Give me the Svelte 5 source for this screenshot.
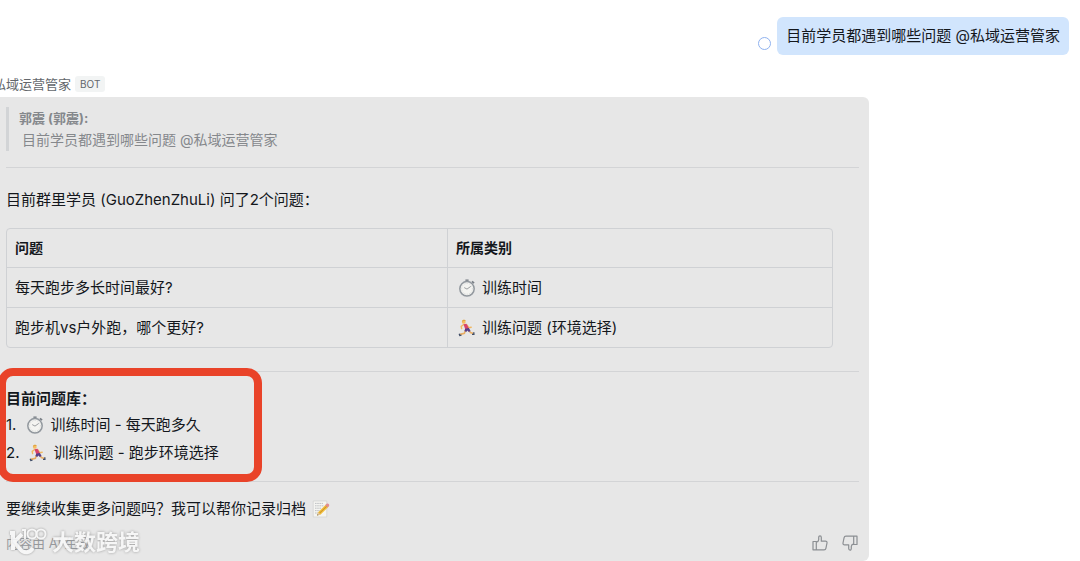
<script lang="ts">
    const question = "目前学员都遇到哪些问题 @私域运营管家";

    const rows = [
        {question: "每天跑步多长时间最好?", icon: "timer", category: "训练时间"},
        {question: "跑步机vs户外跑，哪个更好?", icon: "runner", category: "训练问题 (环境选择)"}
    ];

    const library = [
        {icon: "timer", text: "训练时间 - 每天跑多久"},
        {icon: "runner", text: "训练问题 - 跑步环境选择"}
    ];

    let vote = $state("");
</script>

{#snippet emoji(name)}
  {#if name === "timer"}
    <svg class="emoji" viewBox="0 0 18 18" aria-hidden="true">
      <path d="M7.4 .4h3.2v2.4H7.4z" fill="#858b91"/>
      <path d="M14 2.3l2 1.9" stroke="#777d84" stroke-width="1.8"/>
      <circle cx="9" cy="9.8" r="7.2" fill="#f4f4f1" stroke="#92989e" stroke-width="1.5"/>
      <circle cx="9" cy="9.8" r="5.4" fill="none" stroke="#c7c9ca" stroke-width=".8" stroke-dasharray=".7 1.1"/>
      <path d="M6.2 8.6l2.8 1.5 3.8-2.7" fill="none" stroke="#85898d" stroke-width=".8"/>
    </svg>
  {:else if name === "runner"}
    <svg class="emoji" viewBox="0 0 18 18" aria-hidden="true">
      <path d="M5.4 5.8L3.2 7.4l.4 2.2M9 6l1.8 2.8 2.4-.6" fill="none" stroke="#f2b85f" stroke-width="1.4" stroke-linecap="round"/>
      <path d="M7.4 11.4l-1 2.9-4.4 1.1M11 11.6l1.4 1.9 3 .9" fill="none" stroke="#e9ad62" stroke-width="1.6"/>
      <path d="M5.5 5.2l3-.5 2.6 5-3.6 1.3z" fill="#d9436a"/>
      <path d="M7.2 9.8l3.7-.9 1.7 3-1.8 1-1.5-1.4-1 1.5-1.9-.9z" fill="#573f88"/>
      <circle cx="5.8" cy="2.9" r="1.9" fill="#f5bd62"/>
      <path d="M3.9 2.8c.1-2.3 3.3-2.6 3.9-.7l-2.1 0z" fill="#e0a540"/>
      <path d="M1.2 14.7l.6 1.7 1.7-.3M15.8 13.2l.1 2.1-1.9.1" fill="none" stroke="#3f4d68" stroke-width="1.3"/>
    </svg>
  {:else}
    <svg class="emoji" viewBox="0 0 18 18" aria-hidden="true">
      <path d="M1.2 1h13.6v16H1.2z" fill="#f4f4f1" stroke="#d0d1d0" stroke-width=".7"/>
      <path d="M3 3.4h8M3 5.8h9M3 8.2h6M3 10.6h5M3 13h3" stroke="#b0b4b8" stroke-width=".8" stroke-dasharray="1.6 .6"/>
      <path d="M5.2 15.5l1-3.3 8-8 2.5 2.4-8.1 8z" fill="#f1bd38"/>
      <path d="M7.2 13.5l8.3-8.1" stroke="#b98228" stroke-width=".8"/>
      <path d="M13.2 5.2l1.5-1.5c1.1-1 3.3 1 2.3 2.2l-1.4 1.5z" fill="#e18d91"/>
      <path d="M5.2 15.5l1-3.3 2.4 2.4z" fill="#e4c69b"/>
      <path d="M5.2 15.5l.4-1.3.9.8z" fill="#444"/>
    </svg>
  {/if}
{/snippet}

<main class="chat">
  <div class="sent">
    <span class="read-state"></span>
    <div class="bubble">{question}</div>
  </div>

  <div class="sender">
    <span>私域运营管家</span>
    <span class="tag">BOT</span>
  </div>

  <article class="card">
    <blockquote>
      <strong>郭震 (郭震):</strong>
      <p>{question}</p>
    </blockquote>
    <hr>
    <p class="intro">目前群里学员 (GuoZhenZhuLi) 问了2个问题：</p>
    <table>
      <thead>
        <tr><th scope="col">问题</th><th scope="col">所属类别</th></tr>
      </thead>
      <tbody>
        {#each rows as row}
          <tr>
            <td>{row.question}</td>
            <td><span class="with-icon">{@render emoji(row.icon)}{row.category}</span></td>
          </tr>
        {/each}
      </tbody>
    </table>
    <hr>
    <section class="library">
      <h2>目前问题库：</h2>
      <ol>
        {#each library as item, index}
          <li><span class="number">{index + 1}.</span>{@render emoji(item.icon)}{item.text}</li>
        {/each}
      </ol>
      <div class="marker"></div>
    </section>
    <hr>
    <p class="closing">要继续收集更多问题吗？我可以帮你记录归档 {@render emoji("memo")}</p>
    <footer>
      <span>内容由 AI 生成</span>
      <div class="votes">
        <button aria-label="赞" aria-pressed={vote === "up"} onclick={() => vote = "up"}>
          <svg viewBox="0 0 16 16">
            <path d="M1 6.5h3.3v8.3H1zM4.3 7.2c1.6-.3 2.3-1.3 2.4-2.6V2.4c0-2 2.6-2 2.6.1v3.7h4.2c1 0 1.7.8 1.5 1.8l-1.1 5.3c-.2 1-.8 1.5-1.8 1.5H4.3"/>
          </svg>
        </button>
        <button aria-label="踩" aria-pressed={vote === "down"} onclick={() => vote = "down"}>
          <svg class="down" viewBox="0 0 16 16">
            <path d="M1 6.5h3.3v8.3H1zM4.3 7.2c1.6-.3 2.3-1.3 2.4-2.6V2.4c0-2 2.6-2 2.6.1v3.7h4.2c1 0 1.7.8 1.5 1.8l-1.1 5.3c-.2 1-.8 1.5-1.8 1.5H4.3"/>
          </svg>
        </button>
      </div>
      <div class="watermark">
        <svg viewBox="0 0 42 28" aria-hidden="true">
          <path d="M3 5h3v17M15 6l-8 8 6 7c4 5 10 4 13-1"/>
          <path class="loops" d="M15 2h3v9"/>
          <circle class="loops" cx="25" cy="6" r="4.5"/>
          <circle class="loops" cx="34" cy="6" r="4.5"/>
        </svg>
        <span>大数跨境</span>
      </div>
    </footer>
  </article>
</main>

<style>
    :global(body) {
        margin: 0;
        background-color: #fff;
        overflow: hidden;
    }

    .chat {
        font-family: Inter, "Noto Sans CJK SC", sans-serif;
        font-size: 15px;
        line-height: 24px;
        color: #14171c;
        padding-top: 17px;
        margin-left: -7px;
    }

    p, h2, ol, blockquote {
        margin: 0;
        padding: 0;
    }

    .sent {
        display: flex;
        justify-content: flex-end;
        align-items: flex-end;
        gap: 6px;
        padding-right: 11px;
    }

    .read-state {
        width: 11px;
        height: 11px;
        margin-bottom: 5px;
        border: 1px solid #8fb2ef;
        border-radius: 50%;
    }

    .bubble {
        padding: 7px 9px;
        border-radius: 6px;
        background-color: #d1e5fd;
    }

    .sender {
        display: flex;
        align-items: center;
        gap: 4px;
        height: 18px;
        margin-top: 20px;
        font-size: 13px;
        color: #63676c;
    }

    .tag {
        padding: 0 5px;
        border-radius: 3px;
        background-color: #f2f4f4;
        font-size: 10px;
        line-height: 16px;
    }

    .card {
        box-sizing: border-box;
        margin-top: 4px;
        margin-right: 211px;
        padding: 10px 10px 6px 13px;
        border-radius: 6px;
        background-color: #e7e7e7;
    }

    blockquote {
        padding-left: 10px;
        border-left: 3px solid #d2d4d6;
        font-size: 14px;
        line-height: 22px;
        color: #85888c;
    }

    blockquote strong {
        display: block;
        font-size: 13px;
    }

    blockquote p {
        padding-left: 3px;
    }

    hr {
        height: 1px;
        margin: 16px 0 0;
        border: none;
        background-color: #d3d4d6;
    }

    .intro {
        padding: 20px 0 16px;
    }

    table {
        width: calc(100% - 26px);
        table-layout: fixed;
        border: 1px solid #cfd1d4;
        border-radius: 4px;
        border-spacing: 0;
    }

    th, td {
        height: 23px;
        padding: 8px;
        text-align: left;
    }

    th {
        height: 22px;
        font-size: 14px;
        line-height: 22px;
    }

    th:first-child {
        width: 424px;
    }

    td {
        border-top: 1px solid #cfd1d4;
        line-height: 23px;
    }

    th + th, td + td {
        border-left: 1px solid #cfd1d4;
    }

    .with-icon, li, .closing {
        display: flex;
        align-items: center;
    }

    .with-icon {
        gap: 6px;
        padding-left: 2px;
    }

    .emoji {
        flex: none;
        width: 18px;
        height: 18px;
    }

    table + hr {
        margin-top: 23px;
    }

    .library {
        position: relative;
        padding-top: 15px;
    }

    h2 {
        font-size: 15px;
        line-height: 24px;
    }

    ol {
        list-style: none;
    }

    li {
        gap: 6px;
        height: 28px;
    }

    .number {
        padding-right: 4px;
    }

    .marker {
        position: absolute;
        top: -4px;
        left: -8px;
        width: 248px;
        height: 98px;
        border: 8px solid #e94329;
        border-radius: 15px;
        pointer-events: none;
    }

    .library + hr {
        margin-top: 14px;
    }

    .closing {
        gap: 6px;
        padding-top: 15px;
    }

    footer {
        position: relative;
        display: flex;
        justify-content: space-between;
        align-items: center;
        height: 24px;
        margin-top: 10px;
        font-size: 13px;
        color: #96999d;
    }

    .votes {
        display: flex;
        gap: 14px;
        padding-right: 1px;
    }

    button {
        display: flex;
        padding: 0;
        border: none;
        background: none;
        cursor: pointer;
    }

    button svg {
        width: 16px;
        height: 16px;
        fill: none;
        stroke: #8c8f93;
        stroke-width: 1.2;
        stroke-linejoin: round;
    }

    button .down {
        transform: rotate(180deg);
    }

    .watermark {
        position: absolute;
        top: -3px;
        left: 1px;
        display: flex;
        align-items: center;
        gap: 3px;
        color: #f8f8f8;
        font-size: 22px;
        font-weight: 700;
        line-height: 28px;
        text-shadow: 0 0 3px #8f8f8f;
        opacity: .9;
    }

    .watermark svg {
        width: 42px;
        height: 28px;
        overflow: visible;
        fill: none;
        stroke: #f8f8f8;
        stroke-width: 4;
        filter: drop-shadow(0 0 1px #8f8f8f);
    }

    .watermark .loops {
        stroke-width: 2;
    }
</style>
